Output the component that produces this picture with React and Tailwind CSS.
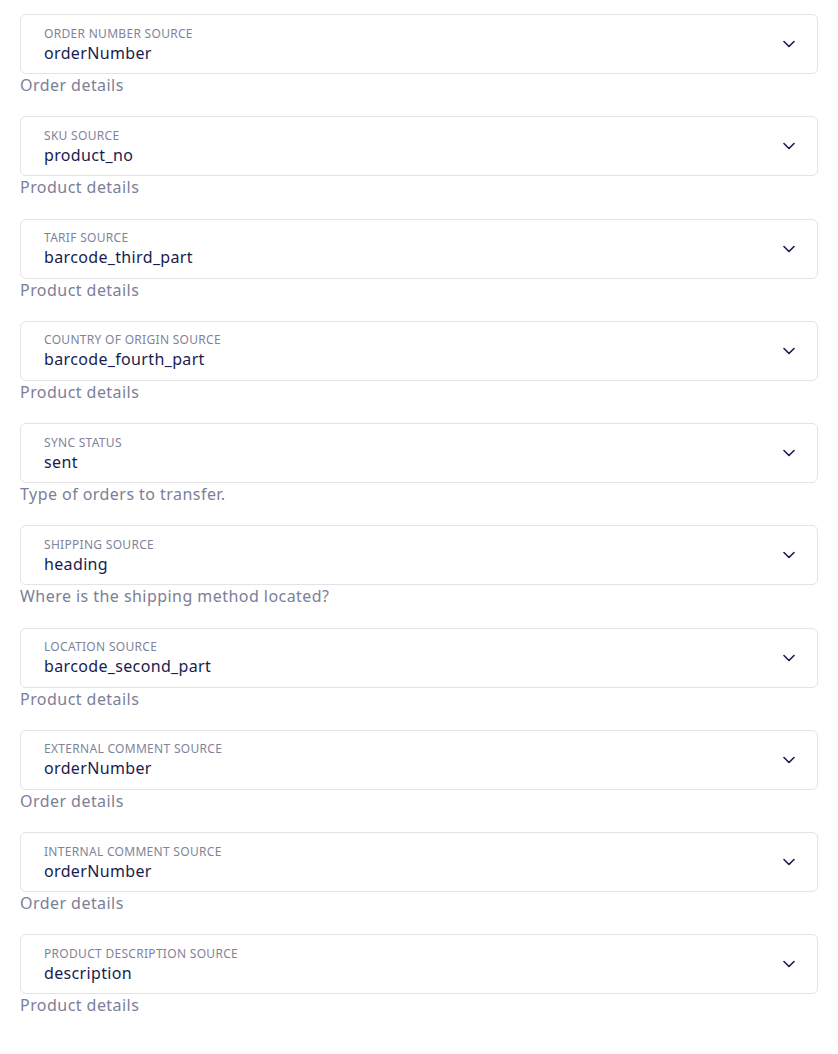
import React from "react";

const fields = [
  ["ORDER NUMBER SOURCE", "orderNumber", "Order details"],
  ["SKU SOURCE", "product_no", "Product details"],
  ["TARIF SOURCE", "barcode_third_part", "Product details"],
  ["COUNTRY OF ORIGIN SOURCE", "barcode_fourth_part", "Product details"],
  ["SYNC STATUS", "sent", "Type of orders to transfer."],
  ["SHIPPING SOURCE", "heading", "Where is the shipping method located?"],
  ["LOCATION SOURCE", "barcode_second_part", "Product details"],
  ["EXTERNAL COMMENT SOURCE", "orderNumber", "Order details"],
  ["INTERNAL COMMENT SOURCE", "orderNumber", "Order details"],
  ["PRODUCT DESCRIPTION SOURCE", "description", "Product details"],
];

function Field({ label, value, help }) {
  return (
    <div className="flex flex-col">
      <div className="flex h-[60px] items-center rounded-md border border-[#e3e3e6] bg-white pl-[23px] pr-[22px]">
        <div className="flex flex-1 flex-col pt-[1px]">
          <span className="text-[12px] leading-[16px] tracking-[0.3px] text-[#80849a]">{label}</span>
          <span className="text-[16px] leading-[22px] tracking-[0.35px] text-[#181c4f]">{value}</span>
        </div>
        <svg width="12" height="8" viewBox="0 0 12 8" fill="none">
          <path d="M1 1.5l5 5 5-5" stroke="#181c4f" strokeWidth="1.6" strokeLinecap="round" strokeLinejoin="round" />
        </svg>
      </div>
      <span className="text-[16px] leading-[22px] tracking-[0.45px] text-[#7b8098]">{help}</span>
    </div>
  );
}

export default function App() {
  return (
    <div
      className="min-h-[1054px] bg-white px-[20px] pt-[14px]"
      style={{ fontFamily: '"Noto Sans", "Open Sans", sans-serif' }}
    >
      <div className="flex flex-col gap-[20.25px]">
        {fields.map(([l, v, h]) => (
          <Field key={l} label={l} value={v} help={h} />
        ))}
      </div>
    </div>
  );
}
